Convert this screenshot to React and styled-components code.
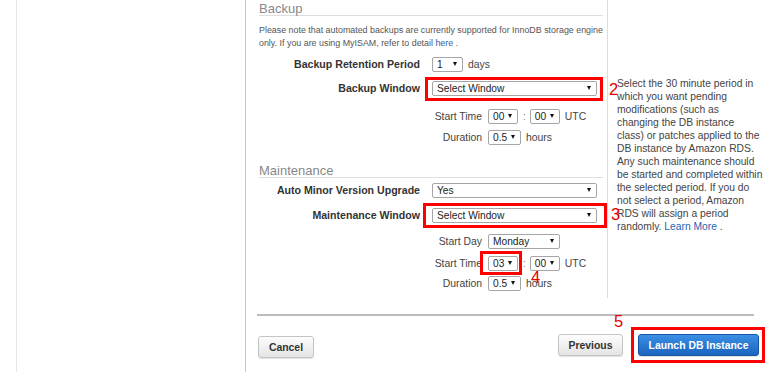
import React from 'react';
import styled, { createGlobalStyle } from 'styled-components';

const GlobalStyle = createGlobalStyle`
  html, body, #root { margin: 0; padding: 0; height: 100%; }
  body {
    font-family: "Liberation Sans", Arial, sans-serif;
    background: #fff;
    color: #333;
    overflow: hidden;
  }
`;

const Page = styled.div`
  display: flex;
  width: 770px;
  height: 100%;
`;

const Gutter = styled.div`
  flex: none;
  width: 16px;
  border-right: 1px solid #e6e6e6;
`;

const Sidebar = styled.div`
  flex: none;
  width: 228px;
  border-right: 1px solid #c9c9c9;
`;

const Main = styled.div`
  flex: 1;
  display: flex;
  flex-direction: column;
  min-width: 0;
`;

const TopArea = styled.div`
  display: flex;
`;

const FormColumn = styled.div`
  flex: none;
  width: 362px;
  box-sizing: border-box;
  padding: 0 4px 5px 13px;
  border-right: 1px solid #dcdcdc;
`;

const HelpColumn = styled.div`
  flex: 1;
  padding: 77px 4px 0 9px;
  font-size: 10.3px;
  line-height: 13px;
  color: #444;
`;

const SectionHeading = styled.div`
  margin-top: ${p => p.$mt || 0}px;
  padding-top: 2px;
  font-size: 13px;
  line-height: 13px;
  color: #888;
  border-bottom: 1px solid #dedede;
`;

const Note = styled.div`
  margin: 8px 0 0;
  font-size: 8.9px;
  line-height: 13px;
  color: #555;
`;

const NoteLine = styled.div`
  white-space: nowrap;
`;

const Link = styled.a`
  color: #1f63b0;
  text-decoration: none;
`;

const Row = styled.div`
  display: flex;
  align-items: center;
  height: 20px;
  margin-top: ${p => p.$mt || 0}px;
`;

const FieldLabel = styled.div`
  flex: none;
  width: ${p => (p.$sub ? 223 : 161)}px;
  margin-right: ${p => (p.$sub ? 6 : 12)}px;
  text-align: right;
  white-space: nowrap;
  font-size: ${p => (p.$sub ? '10.4px' : '10.6px')};
  font-weight: ${p => (p.$sub ? 'normal' : 'bold')};
  color: ${p => (p.$sub ? '#444' : '#333')};
`;

const SelectBox = styled.div`
  flex: none;
  display: inline-flex;
  align-items: center;
  justify-content: space-between;
  box-sizing: border-box;
  width: ${p => p.$w}px;
  height: 15px;
  padding: 0 5px 0 4px;
  border: 1px solid #a6a6a6;
  border-radius: 2px;
  background: #fff;
  font-size: 10.2px;
  color: #222;
  white-space: nowrap;
`;

const Caret = styled.span`
  width: 0;
  height: 0;
  border-left: 2.5px solid transparent;
  border-right: 2.5px solid transparent;
  border-top: 4px solid #111;
`;

const Select = ({ w, children }) => (
  <SelectBox $w={w}>
    <span>{children}</span>
    <Caret />
  </SelectBox>
);

const Unit = styled.span`
  margin-left: 5px;
  font-size: 10.4px;
  color: #444;
`;

const Colon = styled.span`
  margin: 0 4px 0 5px;
  font-size: 10px;
  color: #888;
`;

const Highlight = styled.span`
  position: relative;
  display: inline-flex;
  flex: none;
  margin-left: ${p => p.$ml || 0}px;
`;

const Frame = styled.span`
  position: absolute;
  top: ${p => p.$t}px;
  right: ${p => p.$r}px;
  bottom: ${p => p.$b}px;
  left: ${p => p.$l}px;
  border: 3px solid #f00;
  pointer-events: none;
`;

const Marker = styled.span`
  position: absolute;
  left: ${p => p.$left};
  top: ${p => p.$top}px;
  font-size: 16.5px;
  line-height: 1;
  color: #e60000;
`;

const Separator = styled.div`
  margin: 16px 16px 0 11px;
  border-top: 2px solid #bdbdbd;
`;

const ButtonRow = styled.div`
  display: flex;
  align-items: flex-start;
  padding: 18px 11px 0 12px;
`;

const Spacer = styled.div`
  flex: 1;
`;

const Button = styled.button`
  flex: none;
  box-sizing: border-box;
  width: ${p => p.$w}px;
  height: 22px;
  margin-top: ${p => p.$mt || 0}px;
  padding: 0;
  font-family: "Liberation Sans", Arial, sans-serif;
  font-size: 10.4px;
  font-weight: bold;
  border-radius: 3px;
  cursor: pointer;
  color: ${p => (p.$primary ? '#fff' : '#333')};
  border: 1px solid ${p => (p.$primary ? '#1756a3' : '#c4c4c4')};
  background: ${p =>
    p.$primary
      ? 'linear-gradient(#3a8fe4, #1a64c0)'
      : 'linear-gradient(#fdfdfd, #e4e4e4)'};
  box-shadow: 0 1px 1px rgba(0, 0, 0, 0.12);
`;

export default function App() {
  return (
    <>
      <GlobalStyle />
      <Page>
        <Gutter />
        <Sidebar />
        <Main>
          <TopArea>
            <FormColumn>
              <SectionHeading>Backup</SectionHeading>
              <Note>
                <NoteLine>
                  Please note that automated backups are currently supported for InnoDB storage engine
                </NoteLine>
                <NoteLine>
                  only. If you are using MyISAM, refer to detail <Link href="#">here</Link> .
                </NoteLine>
              </Note>
              <Row $mt={4}>
                <FieldLabel>Backup Retention Period</FieldLabel>
                <Select w={31}>1</Select>
                <Unit>days</Unit>
              </Row>
              <Row $mt={4}>
                <FieldLabel>Backup Window</FieldLabel>
                <Highlight>
                  <Select w={165}>Select Window</Select>
                  <Frame $t={-4} $r={-6} $b={-5} $l={-7} />
                  <Marker $left="calc(100% + 12px)" $top={0}>2</Marker>
                </Highlight>
              </Row>
              <Row $mt={8}>
                <FieldLabel $sub>Start Time</FieldLabel>
                <Select w={30}>00</Select>
                <Colon>:</Colon>
                <Select w={30}>00</Select>
                <Unit>UTC</Unit>
              </Row>
              <Row $mt={1}>
                <FieldLabel $sub>Duration</FieldLabel>
                <Select w={33}>0.5</Select>
                <Unit>hours</Unit>
              </Row>

              <SectionHeading $mt={15}>Maintenance</SectionHeading>
              <Row $mt={2}>
                <FieldLabel>Auto Minor Version Upgrade</FieldLabel>
                <Select w={165}>Yes</Select>
              </Row>
              <Row $mt={5}>
                <FieldLabel>Maintenance Window</FieldLabel>
                <Highlight>
                  <Select w={165}>Select Window</Select>
                  <Frame $t={-5} $r={-10} $b={-5} $l={-9} />
                  <Marker $left="calc(100% + 14px)" $top={-1.5}>3</Marker>
                </Highlight>
              </Row>
              <Row $mt={6}>
                <FieldLabel $sub>Start Day</FieldLabel>
                <Select w={72}>Monday</Select>
              </Row>
              <Row $mt={2}>
                <FieldLabel $sub>Start Time</FieldLabel>
                <Highlight>
                  <Select w={30}>03</Select>
                  <Frame $t={-4.5} $r={-4} $b={-4.5} $l={-8} />
                  <Marker $left="calc(100% + 13px)" $top={13.5}>4</Marker>
                </Highlight>
                <Colon>:</Colon>
                <Select w={30}>00</Select>
                <Unit>UTC</Unit>
              </Row>
              <Row>
                <FieldLabel $sub>Duration</FieldLabel>
                <Select w={33}>0.5</Select>
                <Unit>hours</Unit>
              </Row>
            </FormColumn>
            <HelpColumn>
              Select the 30 minute period in<br />
              which you want pending<br />
              modifications (such as<br />
              changing the DB instance<br />
              class) or patches applied to the<br />
              DB instance by Amazon RDS.<br />
              Any such maintenance should<br />
              be started and completed within<br />
              the selected period. If you do<br />
              not select a period, Amazon<br />
              RDS will assign a period<br />
              randomly. <Link href="#">Learn More</Link> .
            </HelpColumn>
          </TopArea>
          <Separator />
          <ButtonRow>
            <Button $w={56} $mt={2}>Cancel</Button>
            <Spacer />
            <Button $w={65}>Previous</Button>
            <Highlight $ml={15}>
              <Button $w={121} $primary>Launch DB Instance</Button>
              <Frame $t={-7} $r={-6} $b={-7} $l={-7} />
              <Marker $left="-24px" $top={-21}>5</Marker>
            </Highlight>
          </ButtonRow>
        </Main>
      </Page>
    </>
  );
}
